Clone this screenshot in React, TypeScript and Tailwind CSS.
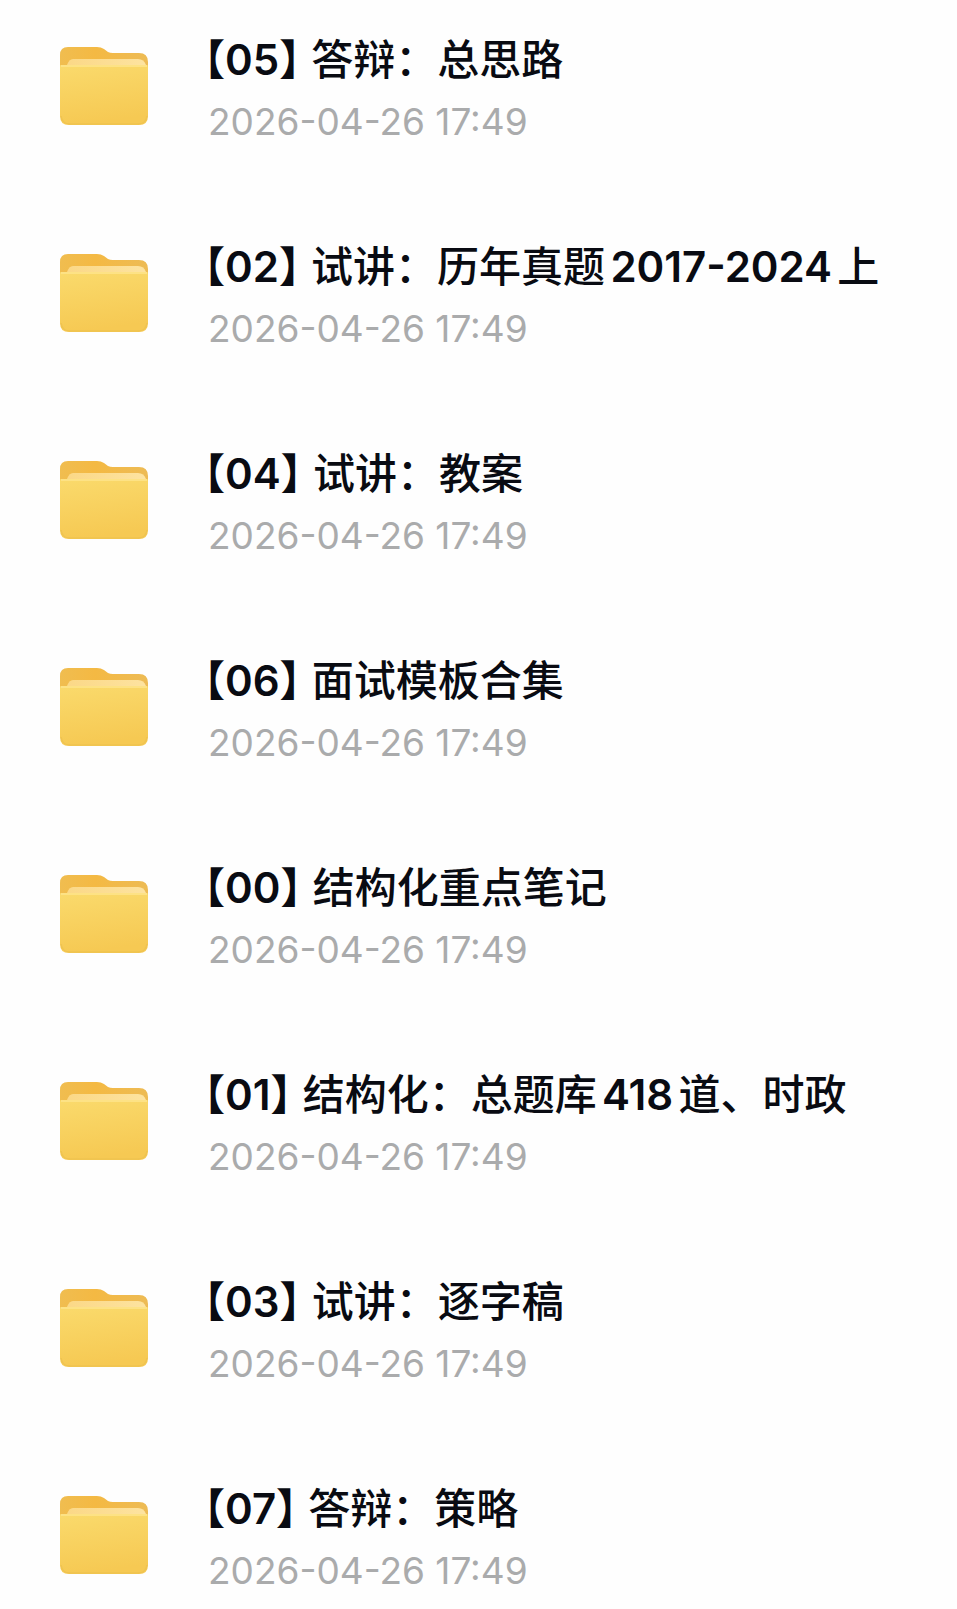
import React from "react";

const folders = [
  { code: "05", name: "答辩：总思路", date: "2026-04-26 17:49" },
  { code: "02", name: "试讲：历年真题2017-2024上", date: "2026-04-26 17:49" },
  { code: "04", name: "试讲：教案", date: "2026-04-26 17:49" },
  { code: "06", name: "面试模板合集", date: "2026-04-26 17:49" },
  { code: "00", name: "结构化重点笔记", date: "2026-04-26 17:49" },
  { code: "01", name: "结构化：总题库418道、时政", date: "2026-04-26 17:49" },
  { code: "03", name: "试讲：逐字稿", date: "2026-04-26 17:49" },
  { code: "07", name: "答辩：策略", date: "2026-04-26 17:49" },
];

const FolderIcon = () => {
  return (
    <svg viewBox="0 0 88 84" className="h-[84px] w-[88px] shrink-0" aria-hidden="true">
      <defs>
        <linearGradient id="folder-tab" x1="0" y1="0" x2="1" y2="0">
          <stop offset="0" stopColor="#f0bd50" />
          <stop offset="0.4" stopColor="#f4b943" />
          <stop offset="1" stopColor="#edbb55" />
        </linearGradient>
        <linearGradient id="folder-front" x1="0" y1="0" x2="0.2" y2="1">
          <stop offset="0" stopColor="#fada6c" />
          <stop offset="1" stopColor="#f6c953" />
        </linearGradient>
        <linearGradient id="folder-paper" x1="0" y1="0" x2="1" y2="0">
          <stop offset="0" stopColor="#fbd887" />
          <stop offset="1" stopColor="#fde3a0" />
        </linearGradient>
      </defs>
      <path
        d="M0 24V9Q0 1 8 1H37Q41 1 44 3L48 6Q50 7 53 7H79Q88 7 88 16V24Z"
        fill="url(#folder-tab)"
      />
      <path d="M7 24V19Q9 13 13 13H78Q84 13 86 19V24Z" fill="url(#folder-paper)" />
      <path
        d="M0 20Q0 19 1 19H87Q88 19 88 20V70Q88 79 79 79H9Q0 79 0 70Z"
        fill="url(#folder-front)"
      />
      <path d="M1 70Q2 78 10 78H78Q86 78 87 70" fill="none" stroke="#efc350" strokeWidth="1.5" />
      <path d="M1 20H87" stroke="#fde285" strokeWidth="2" />
    </svg>
  );
};

// Latin digits are set one weight heavier than the Chinese around them
const FolderName = ({ name }: { name: string }) => (
  <>
    {name.split(/([\d-]+)/).map((part, i) =>
      /\d/.test(part) ? (
        <span key={i} className="font-semibold">
          {part}
        </span>
      ) : (
        part
      )
    )}
  </>
);

export default function App() {
  return (
    <main
      lang="zh-CN"
      className="min-h-screen w-full bg-[#fefefe] pt-8 pb-4 font-['Inter','Noto_Sans_CJK_SC',sans-serif]"
    >
      <ul className="flex flex-col gap-[95px]">
        {folders.map((folder) => (
          <li key={folder.code} className="flex items-center gap-14 px-[60px]">
            <FolderIcon />
            <div className="flex min-w-0 flex-col gap-3 whitespace-nowrap">
              <h2 className="text-[42px] leading-[56px] font-medium text-[#090b12] [text-autospace:normal]">
                <span className="font-semibold [font-feature-settings:'halt']">
                  【{folder.code}】
                </span>{" "}
                <FolderName name={folder.name} />
              </h2>
              <p className="pl-1 text-[37px] leading-[44px] text-[#aaabac]">{folder.date}</p>
            </div>
          </li>
        ))}
      </ul>
    </main>
  );
}
